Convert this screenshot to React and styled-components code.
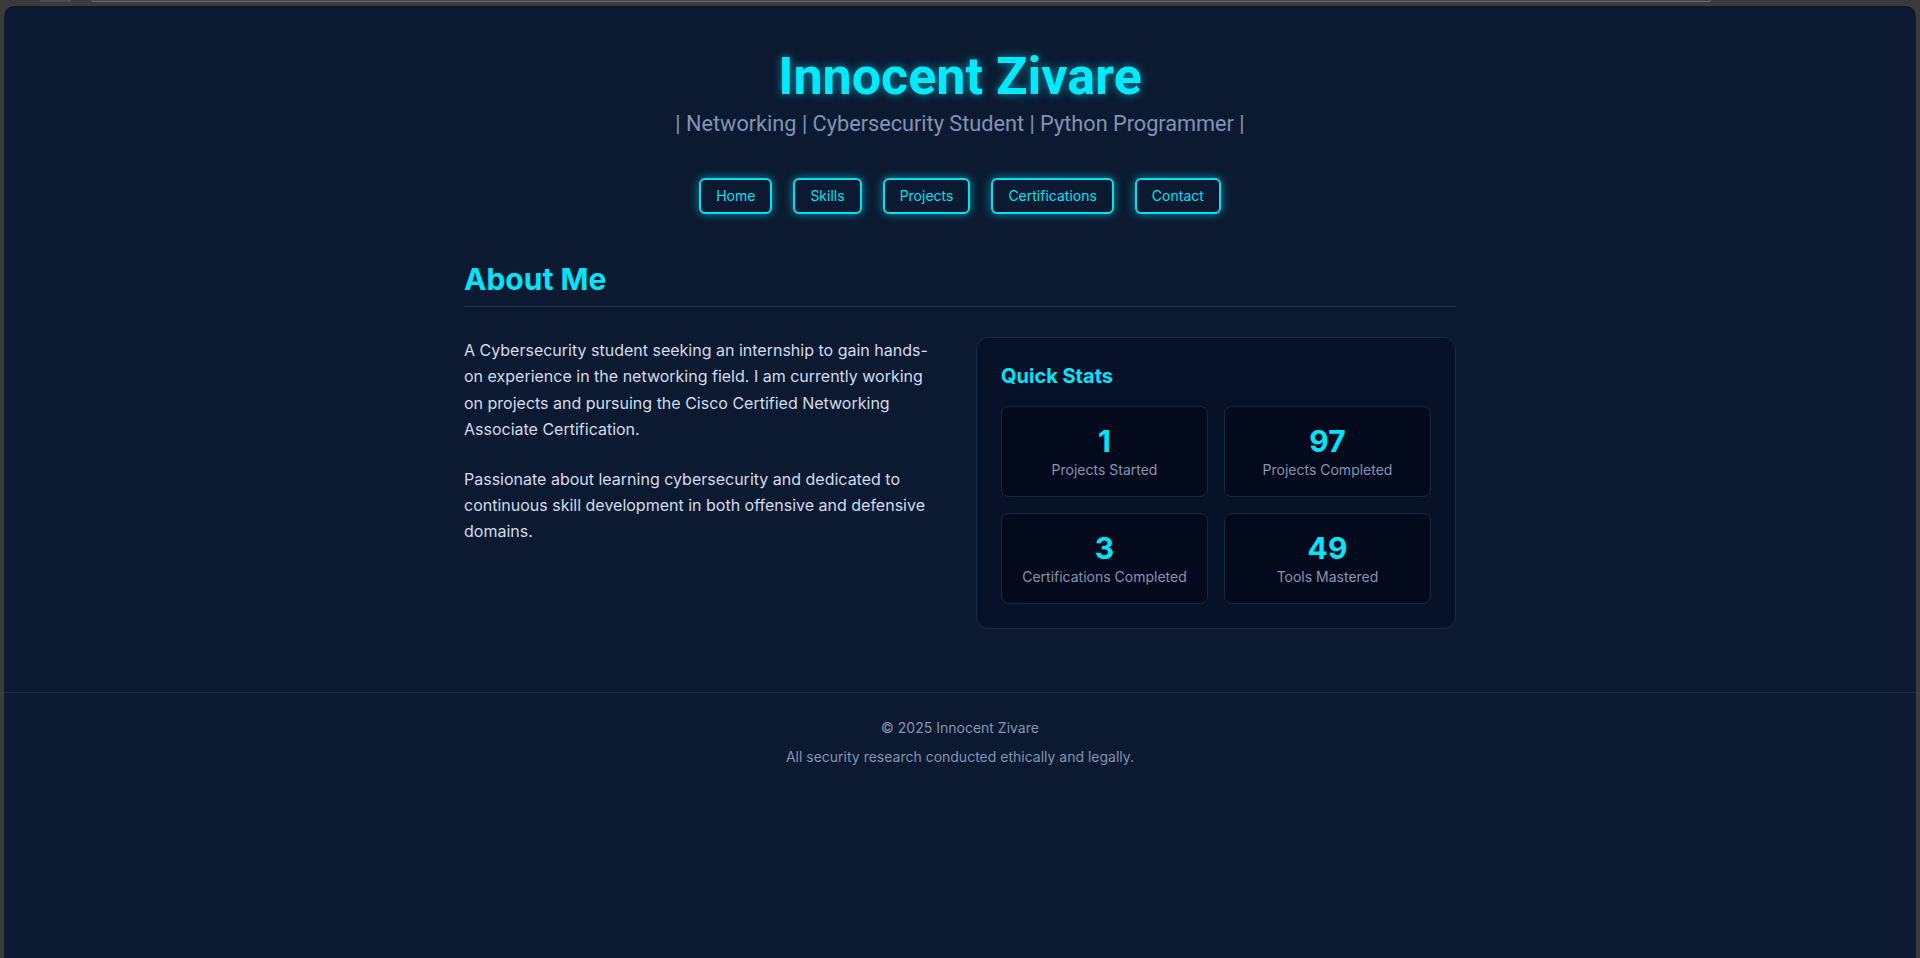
import styled, { createGlobalStyle } from 'styled-components'

const GlobalStyle = createGlobalStyle`
  html, body {
    margin: 0;
    padding: 0;
    background: #3b3b3b;
  }
  body {
    font-family: 'Inter', 'Liberation Sans', sans-serif;
  }
  * {
    box-sizing: border-box;
  }
`

const stats = [
  { value: '1', label: 'Projects Started' },
  { value: '97', label: 'Projects Completed' },
  { value: '3', label: 'Certifications Completed' },
  { value: '49', label: 'Tools Mastered' },
]

const links = ['Home', 'Skills', 'Projects', 'Certifications', 'Contact']

function App() {
  return (
    <>
      <GlobalStyle />
      <Frame>
        <TopStrip>
          <Tab />
          <AddressBar />
        </TopStrip>
        <Panel>
          <Header>
            <Title>Innocent Zivare</Title>
            <Subtitle>| Networking | Cybersecurity Student | Python Programmer |</Subtitle>
            <Nav>
              {links.map((l) => (
                <NavButton key={l}>{l}</NavButton>
              ))}
            </Nav>
          </Header>

          <Main>
            <SectionTitle>About Me</SectionTitle>
            <AboutGrid>
              <div>
                <Paragraph>
                  A Cybersecurity student seeking an internship to gain hands-on experience in the
                  networking field. I am currently working on projects and pursuing the Cisco
                  Certified Networking Associate Certification.
                </Paragraph>
                <Paragraph>
                  Passionate about learning cybersecurity and dedicated to continuous skill
                  development in both offensive and defensive domains.
                </Paragraph>
              </div>
              <StatsCard>
                <CardTitle>Quick Stats</CardTitle>
                <StatsGrid>
                  {stats.map((s) => (
                    <StatBox key={s.label}>
                      <StatValue>{s.value}</StatValue>
                      <StatLabel>{s.label}</StatLabel>
                    </StatBox>
                  ))}
                </StatsGrid>
              </StatsCard>
            </AboutGrid>
          </Main>

          <Footer>
            <FooterText>© 2025 Innocent Zivare</FooterText>
            <FooterText>All security research conducted ethically and legally.</FooterText>
          </Footer>
        </Panel>
      </Frame>
    </>
  )
}

export default App

const Frame = styled.div`
  min-height: 100vh;
  display: flex;
  flex-direction: column;
`

const TopStrip = styled.div`
  height: 6px;
  display: flex;
  align-items: flex-start;
  gap: 20px;
  padding: 0 209px 0 40px;
`

const Tab = styled.div`
  width: 31px;
  height: 2px;
  background: #4e4e4e;
`

const AddressBar = styled.div`
  flex: 1;
  height: 2px;
  background: #454545;
  border-bottom: 1px solid #6a6a6a;
  border-radius: 0 0 3px 3px;
`

const Panel = styled.div`
  flex: 1;
  margin: 0 4px;
  background: #0b1a30;
  border-radius: 10px 10px 0 0;
  display: flex;
  flex-direction: column;
`

const Header = styled.header`
  padding-top: 40px;
  text-align: center;
`

const Title = styled.h1`
  margin: 0;
  font-family: 'Roboto', 'Inter', sans-serif;
  font-size: 52px;
  font-weight: 700;
  line-height: 62px;
  color: #00eaff;
  text-shadow: 0 0 10px rgba(0, 234, 255, 0.55);
`

const Subtitle = styled.p`
  margin: 1px 0 0;
  font-family: 'Roboto', 'Inter', sans-serif;
  font-size: 21.7px;
  line-height: 30px;
  color: #8393b3;
`

const Nav = styled.nav`
  margin-top: 39px;
  display: flex;
  justify-content: center;
  gap: 21px;
`

const NavButton = styled.a`
  display: inline-block;
  padding: 8px 15px;
  border: 2px solid #00e1f5;
  border-radius: 6px;
  font-size: 14px;
  font-weight: 400;
  line-height: 16px;
  color: #00e1f5;
  background: #0b1a30;
  box-shadow: 0 0 10px rgba(0, 225, 245, 0.6);
  cursor: pointer;
`

const Main = styled.main`
  width: 992px;
  margin: 0 auto;
  padding: 47px 0 63px;
`

const SectionTitle = styled.h2`
  margin: 0;
  padding-bottom: 9px;
  border-bottom: 1px solid #25354d;
  font-size: 30px;
  font-weight: 700;
  line-height: 36px;
  color: #00e5ff;
`

const AboutGrid = styled.div`
  margin-top: 30px;
  display: grid;
  grid-template-columns: 1fr 1fr;
  gap: 32px;
  align-items: start;
`

const Paragraph = styled.p`
  margin: 0 0 23px;
  font-size: 16px;
  line-height: 26.4px;
  color: #d3dcee;
`

const StatsCard = styled.div`
  padding: 24px;
  border: 1px solid #0e2f45;
  border-radius: 12px;
  background: #071228;
`

const CardTitle = styled.h3`
  margin: 0 0 16px;
  font-size: 20px;
  font-weight: 700;
  line-height: 28px;
  color: #00e5ff;
`

const StatsGrid = styled.div`
  display: grid;
  grid-template-columns: 1fr 1fr;
  gap: 16px;
`

const StatBox = styled.div`
  padding: 16px 10px;
  border: 1px solid #0d2c42;
  border-radius: 8px;
  background: #030a1b;
  text-align: center;
`

const StatValue = styled.div`
  font-size: 30px;
  font-weight: 700;
  line-height: 36px;
  color: #00e5ff;
`

const StatLabel = styled.div`
  font-size: 14px;
  line-height: 21px;
  color: #8794b0;
`

const Footer = styled.footer`
  border-top: 1px solid #1f2d44;
  padding: 24px 0 40px;
  text-align: center;
`

const FooterText = styled.p`
  margin: 0 0 8px;
  font-size: 14px;
  line-height: 21px;
  color: #8593b2;
`
